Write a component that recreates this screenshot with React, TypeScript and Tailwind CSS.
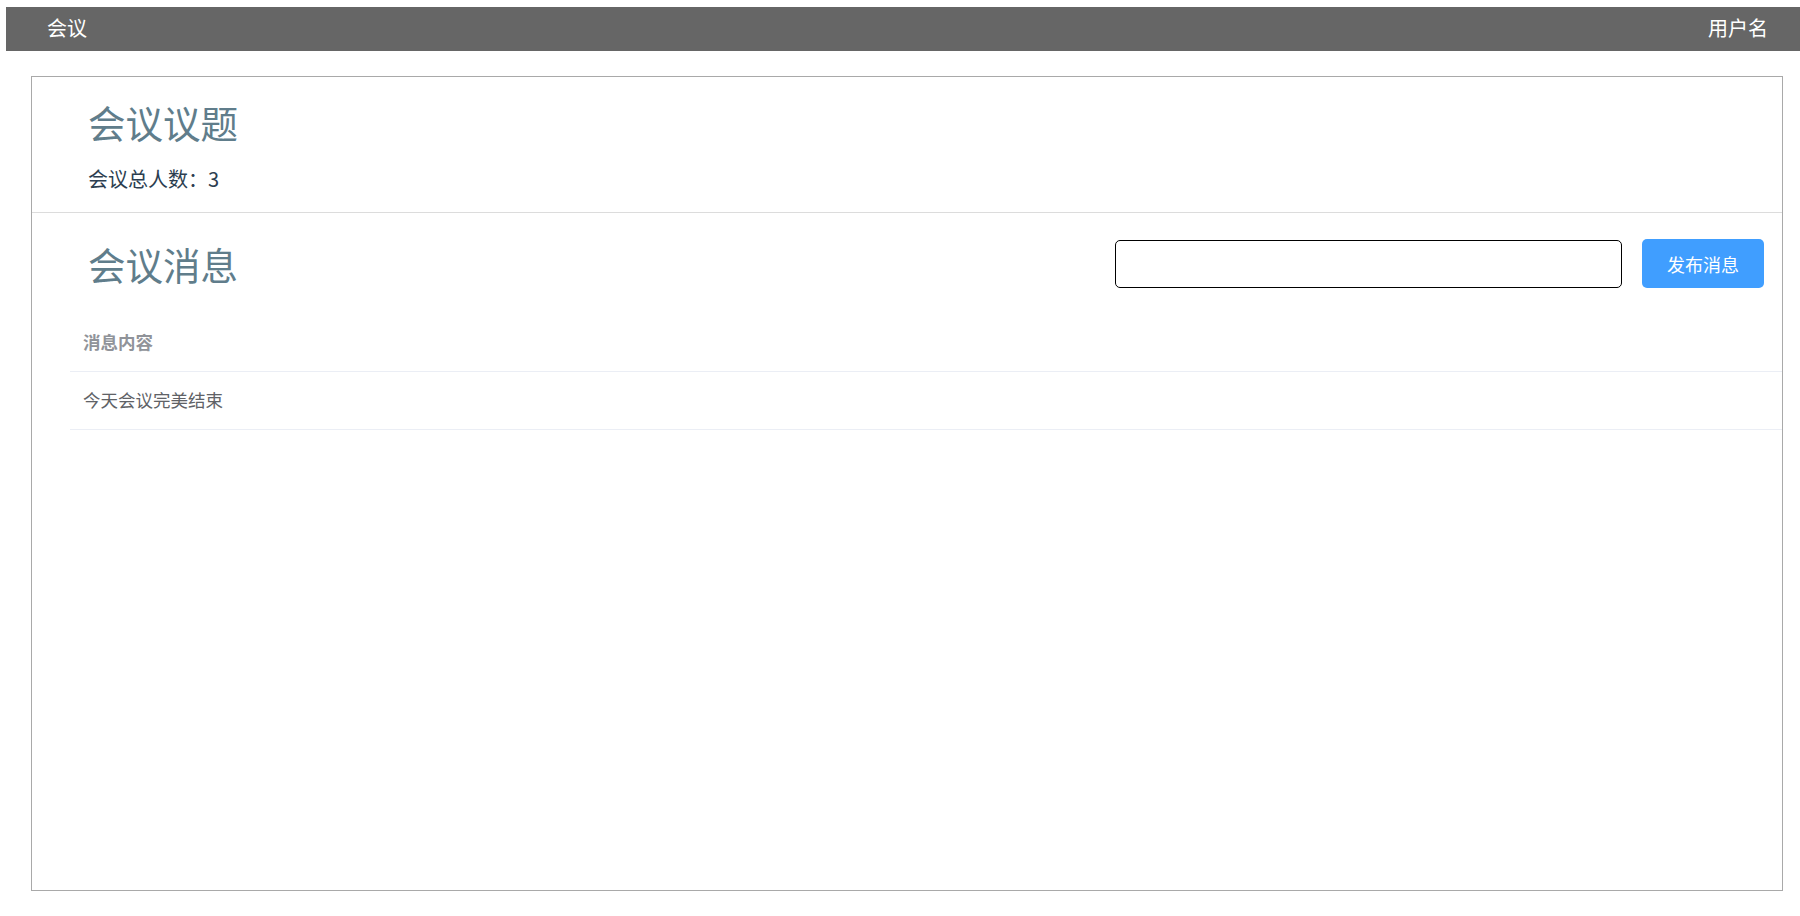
import { FC, useState } from "react";

interface Message {
  id: number;
  content: string;
}

const initialMessages: Message[] = [{ id: 1, content: "今天会议完美结束" }];

const App: FC = () => {
  const [draft, setDraft] = useState("");
  const [messages, setMessages] = useState<Message[]>(initialMessages);

  const publish = () => {
    if (!draft.trim()) return;
    setMessages((list) => [...list, { id: list.length + 1, content: draft }]);
    setDraft("");
  };

  return (
    <div
      className="min-h-[916px] bg-white pt-[7px]"
      style={{ fontFamily: '"Noto Sans CJK SC", "Liberation Sans", sans-serif' }}
    >
      {/* top bar */}
      <header className="ml-[6px] flex h-[44px] items-center justify-between bg-[#666666] pl-[41px] pr-[32px] text-[20px] leading-[20px] text-white">
        <span className="-mt-[3px]">会议</span>
        <span className="-mt-[3px]">用户名</span>
      </header>

      <main className="mb-[25px] ml-[31px] mr-[17px] mt-[25px] flex h-[815px] flex-col border border-[#a9a9a9]">
        <section className="border-b border-[#dcdcdc] pb-[23px] pl-[56px] pt-[26px]">
          <h1 className="text-[37.5px] font-normal leading-[38px] text-[#607d8b]">
            会议议题
          </h1>
          <p className="mt-[28px] text-[20px] leading-[20px] text-[#2c3e50]">
            会议总人数：3
          </p>
        </section>

        <section className="pt-[26px]">
          <div className="flex h-[49px] items-center pl-[56px] pr-[18px]">
            <h2 className="text-[37.5px] font-normal leading-[38px] text-[#607d8b]">
              会议消息
            </h2>
            <input
              value={draft}
              onChange={(e) => setDraft(e.target.value)}
              className="ml-auto h-[48px] w-[507px] rounded-[5px] border border-black px-3 text-[17.5px] outline-none"
            />
            <button
              onClick={publish}
              className="ml-[20px] h-[49px] w-[122px] rounded-[5px] bg-[#409eff] text-[18px] leading-[18px] text-white"
            >
              发布消息
            </button>
          </div>

          <div className="ml-[38px] mt-[25px] text-[17.5px]">
            <div className="flex h-[59px] items-center border-b border-[#ebeef5] pl-[13px] font-bold text-[#909399]">
              消息内容
            </div>
            {messages.map((msg) => (
              <div
                key={msg.id}
                className="flex h-[58px] items-center border-b border-[#ebeef5] pl-[13px] text-[#606266]"
              >
                {msg.content}
              </div>
            ))}
          </div>
        </section>
      </main>
    </div>
  );
};

export default App;
